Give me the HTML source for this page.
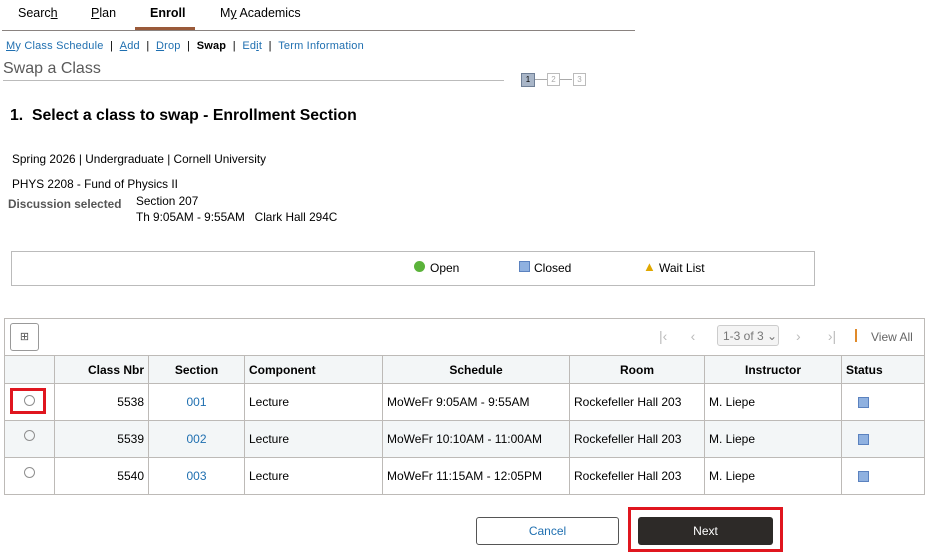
<!DOCTYPE html><html><head><style>
body{margin:0;width:939px;height:559px;background:#fff;font-family:"Liberation Sans",Arial,sans-serif;font-size:12px;color:#000;position:relative;overflow:hidden}
.a{position:absolute;white-space:nowrap}
.l{color:#1f6fb0}
table{position:absolute;left:4px;top:355px;border-collapse:collapse;width:921px}
td,th{border:1px solid #bdbab7;height:36px;padding:0 4px;font-size:12px}
th{background:#f3f6f7;height:27px}
tr.g td{background:#f3f6f7}
.r{width:9px;height:9px;border:1px solid #8f8f8f;border-radius:50%;margin:0 auto;position:relative;top:-4px}
.sq{width:9px;height:9px;background:#8fb1e0;border:1px solid #5b82bf;margin-left:12px}
</style></head><body>
<div class="a" style="left:18px;top:6px;font-size:12.5px">Searc<u>h</u></div>
<div class="a" style="left:91px;top:6px;font-size:12.5px"><u>P</u>lan</div>
<div class="a" style="left:150px;top:6px;font-size:12.5px;font-weight:bold">Enroll</div>
<div class="a" style="left:220px;top:6px;font-size:12.5px">M<u>y</u> Academics</div>
<div class="a" style="left:135px;top:27px;width:60px;height:4px;background:#9a5a3a"></div>
<div class="a" style="left:2px;top:30px;width:633px;height:1px;background:#8a8380"></div>
<div class="a" style="left:6px;top:40px;font-size:11px;letter-spacing:0.2px"><span class="l"><u>M</u>y Class Schedule</span> &nbsp;| &nbsp;<span class="l"><u>A</u>dd</span> &nbsp;| &nbsp;<span class="l"><u>D</u>rop</span> &nbsp;| &nbsp;<b>Swap</b> &nbsp;| &nbsp;<span class="l">Ed<u>i</u>t</span> &nbsp;| &nbsp;<span class="l">Term Information</span></div>
<div class="a" style="left:3px;top:60px;font-size:16px;color:#5a5a5a">Swap a Class</div>
<div class="a" style="left:3px;top:80px;width:501px;height:1px;background:#bbb"></div>
<div class="a" style="left:521px;top:73px;width:12px;height:12px;background:#a9b6c8;border:1px solid #6f7f96;font-size:8px;text-align:center;line-height:12px">1</div>
<div class="a" style="left:535px;top:79px;width:12px;height:1px;background:#aaa"></div>
<div class="a" style="left:547px;top:73px;width:11px;height:11px;border:1px solid #bbb;font-size:8px;color:#aaa;text-align:center;line-height:11px">2</div>
<div class="a" style="left:560px;top:79px;width:12px;height:1px;background:#aaa"></div>
<div class="a" style="left:573px;top:73px;width:11px;height:11px;border:1px solid #bbb;font-size:8px;color:#aaa;text-align:center;line-height:11px">3</div>
<div class="a" style="left:10px;top:107px;font-size:15.8px;font-weight:bold">1.&nbsp; Select a class to swap - Enrollment Section</div>
<div class="a" style="left:12px;top:152px;font-size:11.8px">Spring 2026 | Undergraduate | Cornell University</div>
<div class="a" style="left:12px;top:177px;font-size:11.8px">PHYS 2208 - Fund of Physics II</div>
<div class="a" style="left:8px;top:197px;color:#555;font-weight:bold;font-size:11.8px">Discussion selected</div>
<div class="a" style="left:136px;top:194px;font-size:11.8px">Section 207</div>
<div class="a" style="left:136px;top:210px;font-size:11.8px">Th 9:05AM - 9:55AM &nbsp; Clark Hall 294C</div>
<div class="a" style="left:11px;top:251px;width:802px;height:33px;border:1px solid #bbb"></div>
<div class="a" style="left:414px;top:261px;width:11px;height:11px;border-radius:50%;background:#5bb33a"></div>
<div class="a" style="left:430px;top:261px">Open</div>
<div class="a" style="left:519px;top:261px;width:9px;height:9px;background:#8fb1e0;border:1px solid #5b82bf"></div>
<div class="a" style="left:534px;top:261px">Closed</div>
<div class="a" style="left:643px;top:259px;font-size:13px;color:#e0a800">▲</div>
<div class="a" style="left:659px;top:261px">Wait List</div>
<div class="a" style="left:4px;top:318px;width:919px;height:37px;border:1px solid #bdbab7;border-bottom:none"></div>
<div class="a" style="left:10px;top:323px;width:27px;height:26px;border:1px solid #999;border-radius:3px;text-align:center;line-height:26px;font-size:11px;color:#555">⊞</div>
<div class="a" style="left:659px;top:328px;color:#bbb;font-size:14px">|‹&nbsp;&nbsp;&nbsp;&nbsp;&nbsp; ‹</div>
<div class="a" style="left:717px;top:325px;width:62px;height:21px;border:1px solid #ccc;border-radius:3px;background:#f4f4f4;color:#777;line-height:21px;padding-left:5px;box-sizing:border-box">1-3 of 3 ⌄</div>
<div class="a" style="left:796px;top:328px;color:#bbb;font-size:14px">›&nbsp;&nbsp;&nbsp;&nbsp;&nbsp;&nbsp; ›|</div>
<div class="a" style="left:855px;top:329px;width:2px;height:13px;background:#e08a2a"></div>
<div class="a" style="left:871px;top:330px;color:#666">View All</div>
<table>
<tr><th style="width:41px"></th><th style="width:85px;text-align:right">Class Nbr</th><th style="width:87px">Section</th><th style="width:129px;text-align:left">Component</th><th style="width:178px">Schedule</th><th style="width:126px">Room</th><th style="width:128px">Instructor</th><th style="text-align:left">Status</th></tr>
<tr><td><div class="r" style="top:-2px"></div></td><td align="right">5538</td><td align="center" class="l">001</td><td>Lecture</td><td>MoWeFr 9:05AM - 9:55AM</td><td>Rockefeller Hall 203</td><td>M. Liepe</td><td><div class="sq"></div></td></tr>
<tr class="g"><td><div class="r"></div></td><td align="right">5539</td><td align="center" class="l">002</td><td>Lecture</td><td>MoWeFr 10:10AM - 11:00AM</td><td>Rockefeller Hall 203</td><td>M. Liepe</td><td><div class="sq"></div></td></tr>
<tr><td><div class="r"></div></td><td align="right">5540</td><td align="center" class="l">003</td><td>Lecture</td><td>MoWeFr 11:15AM - 12:05PM</td><td>Rockefeller Hall 203</td><td>M. Liepe</td><td><div class="sq"></div></td></tr>
</table>
<div class="a" style="left:10px;top:388px;width:36px;height:26px;border:3px solid #e0161f;box-sizing:border-box"></div>
<div class="a" style="left:476px;top:517px;width:143px;height:28px;border:1px solid #555;border-radius:3px;box-sizing:border-box;text-align:center;line-height:26px;color:#1f6fb0">Cancel</div>
<div class="a" style="left:628px;top:507px;width:155px;height:45px;border:3px solid #e0161f;box-sizing:border-box"></div>
<div class="a" style="left:638px;top:517px;width:135px;height:28px;background:#2d2a28;border-radius:3px;text-align:center;line-height:28px;color:#fff">Next</div>
</body></html>
